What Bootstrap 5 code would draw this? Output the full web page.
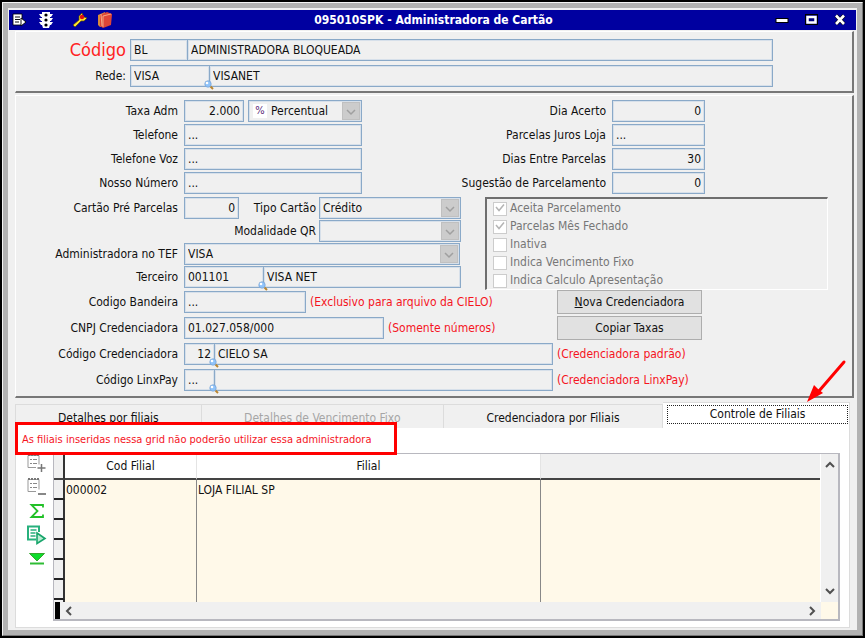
<!DOCTYPE html>
<html lang="pt-BR">
<head>
<meta charset="utf-8">
<meta name="viewport" content="width=device-width, initial-scale=1">
<title>095010SPK - Administradora de Cartão</title>
<link href="https://cdn.jsdelivr.net/npm/bootstrap@5.3.0/dist/css/bootstrap.min.css" rel="stylesheet">
<style>
  body { background: #000; padding: 2px; font-family: "DejaVu Sans Condensed", Tahoma, "DejaVu Sans", sans-serif; font-size: 12px; line-height: 16px; color: #111; }
  .win { border: 1px solid #f4f4f4; border-right-color: #777; border-bottom-color: #777; background: #b2b2b2; padding: 5px; }
  .win-in { background: #f0f0f0; padding: 2px 1px; }
  .titlebar { background: #0000a0; color: #fff; height: 20px; padding: 0 10px 0 3px; }
  .titlebar button, .tools button { border: 0; background: none; padding: 0; line-height: 0; }
  .side { width: 104px; margin-right: -24px; }
  .bevel { border: 1px solid #fff; border-right: 2px solid #777; border-bottom: 2px solid #777; margin: 1px 2px 1px 6px; }
  .p-top { padding: 7px 79px 4px 0; }
  .p-main { padding: 4px 0 5px; }
  .rows1 { gap: 1px; } .rows2 { gap: 2px; } .rows4 { gap: 4px; }
  .gap-top { margin-top: 3px; }
  .lab1 { width: 110px; text-align: right; margin-right: 4px; white-space: nowrap; }
  .lab { width: 162px; text-align: right; margin-right: 6px; white-space: nowrap; }
  .lab-b { text-align: right; margin-right: 3px; white-space: nowrap; }
  .big { font-size: 18px; color: #f22; line-height: 22px; }
  .fld { height: 22px; border: 1px solid #8aa9c8; background: #f0f0f0; padding: 0 3px 1px; color: #111; border-radius: 0; min-width: 0; outline-offset: -1px; box-shadow: inset 0 0 0 1px #d7e0ea; }
  select.fld { appearance: none; width: 100%; display: block; }
  select.fld:disabled { opacity: 1; }
  select.with-icon { padding-left: 22px; }
  .num { text-align: right; }
  .join { margin-left: -1px; }
  .chev { right: 2px; top: 2px; width: 18px; height: 18px; background: #ccc; border: 1px solid #c0c0c0; line-height: 0; pointer-events: none; }
  .lupa { right: -4px; bottom: -3px; width: 10px; height: 10px; line-height: 0; z-index: 2; }
  .pct { left: 5px; top: 4px; width: 14px; height: 14px; background: #fff; color: #5b2a78; font-size: 11px; line-height: 14px; text-align: center; pointer-events: none; }
  .w55 { width: 55px; } .w60 { width: 60px; } .w80 { width: 80px; } .w93 { width: 93px; } .w122 { width: 122px; }
  .w31 { width: 31px; } .w178 { width: 178px; } .w200 { width: 200px; } .w114 { width: 114px; } .w142 { width: 142px; } .w276 { width: 276px; }
  .w58 { width: 58px; }
  .half { width: 426px; } .two3 { width: 469px; } .three4 { width: 541px; }
  .lab-r { width: 164px; text-align: right; margin-right: 6px; white-space: nowrap; }
  .hint { color: #f5141e; white-space: nowrap; }
  .checks { border: 2px solid #6e6e6e; border-right: 1px solid #fff; border-bottom: 1px solid #fff; width: 343px; padding: 1px 6px 0; }
  .checks label { color: #777; height: 17px; line-height: 17px; margin-bottom: 1px; }
  .checks label:last-child { margin-bottom: 0; }
  .checks input { appearance: none; width: 14px; height: 14px; margin: 0 3px 0 0; border: 1px solid #ccc; background: #fff; flex: none; }
  .tick { left: 2px; top: 3px; line-height: 0; }
  .cmd { width: 145px; height: 24px; background: #e1e1e1; border: 1px solid #adadad; padding: 0; color: #111; }
  .tabs { margin: 3px 6px 0 6px; }
  .tabs button { height: 24px; border: 1px solid #dcdcdc; border-bottom: 0; border-left-width: 0; background: #f0f0f0; padding: 2px 0 0; color: #111; min-width: 0; white-space: nowrap; }
  .tabs button:first-child { border-left-width: 1px; }
  .tabs button:disabled { color: #a6a6a6; }
  .tabs .active { height: 26px; background: #fff; padding: 2px 1px 4px 4px; }
  .tabs .active span { display: block; border: 1px dotted #222; height: 19px; line-height: 17px; }
  .t1 { flex: 187 1 0; } .t2 { flex: 244 1 0; } .t3 { flex: 221 1 0; } .t4 { flex: 183 1 0; }
  .pane { background: #fff; border: 1px solid #dcdcdc; border-top: 0; margin: 0 6px 0 6px; padding: 0 9px 6px 0; }
  .warnbox { border: 3px solid #f00; background: #fff; color: #f5141e; width: 382px; height: 33px; font-size: 11px; line-height: 29px; padding-left: 4px; margin: -6px 0 -2px -1px; white-space: nowrap; z-index: 3; }
  .tools { width: 37px; flex: none; padding: 0 0 0 9px; gap: 4px; }
  .gridbox { border: 1px solid #b8b8bf; border-width: 1px 2px 2px 1px; background: #fff; min-width: 0; }
  .gridbox table { height: 100%; width: 100%; table-layout: fixed; border-collapse: separate; border-spacing: 0; background: #fff9e9; }
  .gridbox th, .gridbox td { padding: 0 1px; line-height: 15px; vertical-align: middle; }
  .gridbox td { border-right: 1px solid #888; }
  .gridbox td:last-child { border-right: 0; }
  .gridbox thead th { height: 26px; font-weight: 400; text-align: center; background: #fff; border-bottom: 2px solid #444; border-right: 1px solid #e4e4e4; }
  .gridbox thead th.blank { background: #f0f0f0; border-right: 0; }
  .gridbox tbody th, .gridbox thead th.sel { background: #f0f0f0; border-right: 2px solid #333; }
  .gridbox tbody th { border-bottom: 2px solid #222; height: 20px; }
  .gridbox tbody td { height: 20px; }
  .gridbox tbody tr.rest th, .gridbox tbody tr.rest td { border-bottom: 0; height: auto; line-height: 0; }
  .c-sel { width: 11px; } .c-cod { width: 132px; } .c-fil { width: 344px; }
  .vbar { width: 17px; flex: none; background: #f0f0f0; margin-left: 1px; padding: 7px 0; line-height: 0; }
  .hbar { height: 17px; background: #f0f0f0; line-height: 0; }
  .mark-blk { width: 5px; height: 17px; background: #000; margin-left: 1px; margin-right: 5px; }
  .corner { width: 17px; height: 17px; background: #fff9e9; margin-left: 1px; }
  .arrow { right: 14px; top: 356px; line-height: 0; pointer-events: none; z-index: 4; }
</style>
</head>
<body class="d-flex flex-column min-vh-100">
<svg width="0" height="0" class="position-absolute" aria-hidden="true">
  <symbol id="lupa" viewBox="0 0 10 10"><path d="M6 6l3 3" stroke="#b98530" stroke-width="2"/><circle cx="4" cy="4" r="3.2" fill="#8fc3fa" stroke="#7ba6d8" stroke-width=".8"/><circle cx="3" cy="3" r="1.3" fill="#fff"/></symbol>
  <symbol id="down" viewBox="0 0 16 16"><path d="M4 7l4 4 4-4" fill="none" stroke="#a0a0a0" stroke-width="1.5"/></symbol>
  <symbol id="tick" viewBox="0 0 10 10"><path d="M1 4l3 3.500 5-6" fill="none" stroke="#b4b4b4" stroke-width="1.500"/></symbol>
</svg>
<main class="win flex-grow-1 d-flex flex-column position-relative">
<div class="win-in flex-grow-1 d-flex flex-column">
  <header class="titlebar d-flex align-items-center">
    <div class="side d-flex align-items-center">
      <button type="button" aria-label="Menu"><svg width="16" height="18" viewBox="0 0 16 18"><path d="M1 3h9v11H1z" fill="#fff" stroke="#000" stroke-width=".8"/><path d="M3 6h5M3 8.500h5M3 11h4" stroke="#111"/><path d="M9 7l5 4-5 4z" fill="#fff" stroke="#000" stroke-width=".9"/></svg></button>
      <button type="button" class="ms-2" aria-label="Semáforo"><svg width="20" height="18" viewBox="0 0 20 18"><path d="M6 1h8v2h3l-2 3h-1v1h3l-2 3h-1v1h3l-2 3h-1l-1 3H7l-1-3H5l-2-3h3v-1H5L3 7h3V6H5L3 3h3z" fill="#fff"/><circle cx="10" cy="4" r="1.600"/><circle cx="10" cy="9" r="1.600"/><circle cx="10" cy="14" r="1.600"/></svg></button>
      <button type="button" class="ms-3" aria-label="Ferramentas"><svg width="16" height="18" viewBox="0 0 16 18"><path d="M1 14l6-5V5l3-3 1 3 1 1 3 1-3 3H9l-6 6z" fill="#ffe62e" stroke="#5a4a00" stroke-width=".7"/><circle cx="10" cy="6" r="2.200" fill="#e01010"/></svg></button>
      <button type="button" class="ms-2" aria-label="Livro"><svg width="18" height="18" viewBox="0 0 18 18"><path d="M2 4l7-3 1 13-6 2-2-2z" fill="#d98a3c"/><path d="M4 4l7-3 5 2-1 11-8 3-3-2z" fill="#df4637"/><path d="M7 5l8-2M7 5v11M5 3l1 12" stroke="#f7b48c" stroke-width=".9" fill="none"/></svg></button>
    </div>
    <div class="flex-grow-1 text-center fw-bold">095010SPK - Administradora de Cartão</div>
    <div class="d-flex align-items-center justify-content-end">
      <button type="button" aria-label="Minimizar"><svg width="14" height="16"><rect x="1" y="6.500" width="12" height="4" fill="#fff" stroke="#000"/></svg></button>
      <button type="button" class="ms-3" aria-label="Maximizar"><svg width="13" height="16"><rect x=".5" y="2.500" width="12" height="10" fill="#000080" stroke="#000"/><rect x="2.500" y="5" width="8" height="5.500" fill="none" stroke="#fff" stroke-width="2.500"/></svg></button>
      <button type="button" class="ms-3" aria-label="Fechar"><svg width="12" height="16" viewBox="0 0 12 16"><path d="M2 3.500l8 8.500M10 3.500L2 12" stroke="#000" stroke-width="4"/><path d="M2 3.500l8 8.500M10 3.500L2 12" stroke="#fff" stroke-width="2.600"/></svg></button>
    </div>
  </header>

  <section class="bevel p-top">
    <div class="d-flex align-items-center">
      <label class="lab1 big" for="cod">Código</label>
      <input class="fld w58" id="cod" value="BL"><input class="fld join flex-grow-1" aria-label="Descrição" value="ADMINISTRADORA BLOQUEADA">
    </div>
    <div class="d-flex align-items-center mt-1">
      <label class="lab1" for="rede">Rede:</label>
      <div class="position-relative"><input class="fld w80 d-block" id="rede" value="VISA"><span class="lupa position-absolute"><svg width="10" height="10"><use href="#lupa"/></svg></span></div>
      <input class="fld join flex-grow-1" aria-label="Nome da rede" value="VISANET">
    </div>
  </section>

  <section class="bevel p-main">
    <div class="d-flex">
      <div class="half d-grid rows2">
        <div class="d-flex align-items-center">
          <label class="lab" for="taxa">Taxa Adm</label><input class="fld w60 num" id="taxa" value="2.000">
          <div class="position-relative w114 ms-1"><select class="fld with-icon" aria-label="Tipo da taxa" disabled><option>Percentual</option></select><span class="pct position-absolute">%</span><span class="chev position-absolute"><svg width="16" height="16"><use href="#down"/></svg></span></div>
        </div>
        <div class="d-flex align-items-center"><label class="lab" for="tel">Telefone</label><input class="fld w178" id="tel" value="..."></div>
        <div class="d-flex align-items-center"><label class="lab" for="voz">Telefone Voz</label><input class="fld w178" id="voz" value="..."></div>
        <div class="d-flex align-items-center"><label class="lab" for="nosso">Nosso Número</label><input class="fld w178" id="nosso" value="..."></div>
      </div>
      <div class="d-grid rows2">
        <div class="d-flex align-items-center"><label class="lab-r" for="dia">Dia Acerto</label><input class="fld w93 num" id="dia" value="0"></div>
        <div class="d-flex align-items-center"><label class="lab-r" for="juros">Parcelas Juros Loja</label><input class="fld w93" id="juros" value="..."></div>
        <div class="d-flex align-items-center"><label class="lab-r" for="dias">Dias Entre Parcelas</label><input class="fld w93 num" id="dias" value="30"></div>
        <div class="d-flex align-items-center"><label class="lab-r" for="sug">Sugestão de Parcelamento</label><input class="fld w93 num" id="sug" value="0"></div>
      </div>
    </div>
    <div class="d-flex gap-top">
      <div class="two3 d-grid rows1 align-content-start">
        <div class="d-flex align-items-center">
          <label class="lab" for="pre">Cartão Pré Parcelas</label><input class="fld w55 num" id="pre" value="0">
          <label class="lab-b flex-fill" for="tipo">Tipo Cartão</label>
          <div class="position-relative w142 me-4"><select class="fld" id="tipo"><option>Crédito</option></select><span class="chev position-absolute"><svg width="16" height="16"><use href="#down"/></svg></span></div>
        </div>
        <div class="d-flex align-items-center">
          <label class="lab-b flex-fill" for="qr">Modalidade QR</label>
          <div class="position-relative w142 me-4"><select class="fld" id="qr"><option></option></select><span class="chev position-absolute"><svg width="16" height="16"><use href="#down"/></svg></span></div>
        </div>
        <div class="d-flex align-items-center">
          <label class="lab" for="tef">Administradora no TEF</label>
          <div class="position-relative w276"><select class="fld" id="tef"><option>VISA</option></select><span class="chev position-absolute"><svg width="16" height="16"><use href="#down"/></svg></span></div>
        </div>
        <div class="d-flex align-items-center">
          <label class="lab" for="terc">Terceiro</label>
          <div class="position-relative"><input class="fld w80 d-block" id="terc" value="001101"><span class="lupa position-absolute"><svg width="10" height="10"><use href="#lupa"/></svg></span></div>
          <input class="fld join flex-grow-1 me-4" aria-label="Nome do terceiro" value="VISA NET">
        </div>
      </div>
      <div class="checks d-flex flex-column">
        <label class="d-flex align-items-center position-relative"><input type="checkbox" checked disabled><span class="tick position-absolute"><svg width="10" height="10"><use href="#tick"/></svg></span>Aceita Parcelamento</label>
        <label class="d-flex align-items-center position-relative"><input type="checkbox" checked disabled><span class="tick position-absolute"><svg width="10" height="10"><use href="#tick"/></svg></span>Parcelas Mês Fechado</label>
        <label class="d-flex align-items-center"><input type="checkbox" disabled>Inativa</label>
        <label class="d-flex align-items-center"><input type="checkbox" disabled>Indica Vencimento Fixo</label>
        <label class="d-flex align-items-center"><input type="checkbox" disabled>Indica Calculo Apresentação</label>
      </div>
    </div>
    <div class="d-flex">
      <div class="three4 d-grid rows2">
        <div class="d-flex align-items-center"><label class="lab" for="band">Codigo Bandeira</label><input class="fld w122" id="band" value="..."><span class="hint ms-1">(Exclusivo para arquivo da CIELO)</span></div>
        <div class="d-flex align-items-center"><label class="lab" for="cnpj">CNPJ Credenciadora</label><input class="fld w200" id="cnpj" value="01.027.058/000"><span class="hint ms-1">(Somente números)</span></div>
      </div>
      <div class="d-grid rows2">
        <button type="button" class="cmd"><u>N</u>ova Credenciadora</button>
        <button type="button" class="cmd">Copiar Taxas</button>
      </div>
    </div>
    <div class="d-grid rows4 gap-top">
      <div class="d-flex align-items-center">
        <div class="three4 d-flex align-items-center pe-1">
          <label class="lab" for="cred">Código Credenciadora</label>
          <div class="position-relative"><input class="fld w31 num d-block" id="cred" value="12"><span class="lupa position-absolute"><svg width="10" height="10"><use href="#lupa"/></svg></span></div>
          <input class="fld join flex-grow-1" aria-label="Nome da credenciadora" value="CIELO SA">
        </div><span class="hint">(Credenciadora padrão)</span>
      </div>
      <div class="d-flex align-items-center">
        <div class="three4 d-flex align-items-center pe-1">
          <label class="lab" for="linx">Código LinxPay</label>
          <div class="position-relative"><input class="fld w31 d-block" id="linx" value="..."><span class="lupa position-absolute"><svg width="10" height="10"><use href="#lupa"/></svg></span></div>
          <input class="fld join flex-grow-1" aria-label="Nome LinxPay">
        </div><span class="hint">(Credenciadora LinxPay)</span>
      </div>
    </div>
  </section>

  <div class="tabs d-flex align-items-end" role="tablist">
    <button type="button" role="tab" class="t1">Detalhes por filiais</button>
    <button type="button" role="tab" class="t2" disabled>Detalhes de Vencimento Fixo</button>
    <button type="button" role="tab" class="t3">Credenciadora por Filiais</button>
    <button type="button" role="tab" class="t4 active" aria-selected="true"><span>Controle de Filiais</span></button>
  </div>
  <section class="pane flex-grow-1 d-flex flex-column">
    <div class="warnbox position-relative">As filiais inseridas nessa grid não poderão utilizar essa administradora</div>
    <div class="d-flex flex-grow-1">
      <div class="tools d-flex flex-column">
        <button type="button" aria-label="Incluir linha" class="text-start"><svg width="24" height="20" viewBox="0 0 24 20"><path d="M3 2.500h11v9M3 2.500v12h8" fill="none" stroke="#999"/><path d="M3 2h11" stroke="#777" stroke-width="2" stroke-dasharray="2 1"/><path d="M5 6.500h2M8 6.500h4M5 10.500h2M8 10.500h4" stroke="#888"/><path d="M16.500 11v8M12.500 15h8" stroke="#777" stroke-width="1.500"/></svg></button>
        <button type="button" aria-label="Excluir linha" class="text-start"><svg width="24" height="20" viewBox="0 0 24 20"><path d="M3 2.500h11v10M3 2.500v12h8" fill="none" stroke="#999"/><path d="M3 2h11" stroke="#777" stroke-width="2" stroke-dasharray="2 1"/><path d="M5 6.500h2M8 6.500h4M5 10.500h2M8 10.500h4" stroke="#888"/><path d="M13 17h8" stroke="#888" stroke-width="2"/></svg></button>
        <button type="button" aria-label="Somar" class="text-start"><svg width="24" height="20" viewBox="0 0 24 20"><path d="M18 6.500V4H6.500l6 6-6 6H18v-2.500" fill="none" stroke="#22c028" stroke-width="1.800"/></svg></button>
        <button type="button" aria-label="Executar" class="text-start"><svg width="24" height="20" viewBox="0 0 24 20"><path d="M14 7V1.500H3v13h8" fill="none" stroke="#27b07c" stroke-width="2"/><path d="M5.500 5h6M5.500 8h5M5.500 11h5" stroke="#27b07c" stroke-width="1.500"/><path d="M12 8l8 5.500-8 5z" fill="#b9ecd2" stroke="#18a56b" stroke-width="1.600"/></svg></button>
        <button type="button" aria-label="Ir ao fim" class="text-start"><svg width="24" height="20" viewBox="0 0 24 20"><path d="M4.500 4.500h15L12 12z" fill="#0ddc2c" stroke="#35a82c"/><path d="M5 14.500h14" stroke="#2fbd35" stroke-width="2"/></svg></button>
      </div>
      <div class="gridbox flex-grow-1 d-flex flex-column">
        <div class="d-flex flex-grow-1">
          <div class="flex-grow-1">
            <table>
              <colgroup><col class="c-sel"><col class="c-cod"><col class="c-fil"><col></colgroup>
              <thead><tr><th class="sel"></th><th scope="col">Cod Filial</th><th scope="col">Filial</th><th class="blank"></th></tr></thead>
              <tbody>
                <tr><th></th><td>000002</td><td>LOJA FILIAL SP</td><td></td></tr>
                <tr><th></th><td></td><td></td><td></td></tr>
                <tr><th></th><td></td><td></td><td></td></tr>
                <tr><th></th><td></td><td></td><td></td></tr>
                <tr><th></th><td></td><td></td><td></td></tr>
                <tr><th></th><td></td><td></td><td></td></tr>
                <tr class="rest"><th></th><td></td><td></td><td></td></tr>
              </tbody>
            </table>
          </div>
          <div class="vbar d-flex flex-column align-items-center justify-content-between">
            <svg width="10" height="7"><path d="M1 6l4-4 4 4" fill="none" stroke="#505050" stroke-width="2"/></svg>
            <svg width="10" height="7"><path d="M1 1l4 4 4-4" fill="none" stroke="#505050" stroke-width="2"/></svg>
          </div>
        </div>
        <div class="hbar d-flex align-items-center">
          <span class="mark-blk"></span>
          <svg width="7" height="10"><path d="M6 1L2 5l4 4" fill="none" stroke="#505050" stroke-width="2"/></svg>
          <svg class="ms-auto me-1" width="7" height="10"><path d="M1 1l4 4-4 4" fill="none" stroke="#505050" stroke-width="2"/></svg>
          <span class="corner"></span>
        </div>
      </div>
    </div>
  </section>
</div>
<span class="arrow position-absolute"><svg width="42" height="46" viewBox="0 0 42 46"><path d="M38 3L13 32" stroke="#f00" stroke-width="3" stroke-linecap="round"/><path d="M1 43l7-17 4 4 5 4z" fill="#f00"/></svg></span>
</main>
<script src="https://cdn.jsdelivr.net/npm/bootstrap@5.3.0/dist/js/bootstrap.bundle.min.js"></script>
</body>
</html>
